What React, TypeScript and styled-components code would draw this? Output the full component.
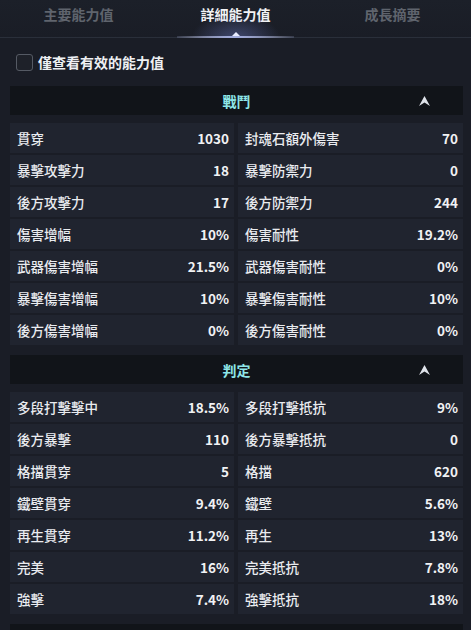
import React from 'react';
import styled, { createGlobalStyle } from 'styled-components';

const GlobalStyle = createGlobalStyle`
  html, body {
    margin: 0;
    padding: 0;
    background: #1a1d26;
  }
  body {
    font-family: "Noto Sans CJK TC", "Noto Sans", sans-serif;
    color: #e6e8ec;
  }
`;

const Page = styled.div`
  width: 471px;
  height: 630px;
  overflow: hidden;
  background: #1a1d26;
`;

const TabBar = styled.div`
  display: flex;
  height: 37px;
  border-bottom: 1px solid #2a2f3a;
  background: linear-gradient(#1c2029, #1a1d26);
`;

const Tab = styled.div<{ $active?: boolean }>`
  flex: 1;
  position: relative;
  display: flex;
  justify-content: center;
  padding-top: 4px;
  font-size: 14px;
  font-weight: 700;
  color: ${(p) => (p.$active ? '#f2f3f5' : '#5f646d')};
`;

const Indicator = styled.div`
  position: absolute;
  left: 20px;
  right: 20px;
  bottom: -1px;
  height: 2px;
  background: linear-gradient(90deg, rgba(160,170,210,0.2), #cfd6f5 50%, rgba(160,170,210,0.2));

  &::before {
    content: '';
    position: absolute;
    left: 50%;
    bottom: 0;
    width: 90px;
    height: 24px;
    transform: translateX(-50%);
    background: radial-gradient(ellipse at 50% 100%, rgba(110,125,200,0.45), rgba(110,125,200,0) 70%);
  }

  &::after {
    content: '';
    position: absolute;
    left: 50%;
    bottom: 2px;
    transform: translateX(-50%);
    border-left: 4px solid transparent;
    border-right: 4px solid transparent;
    border-bottom: 4px solid #e8ecff;
  }
`;

const Content = styled.div`
  padding: 0 8px 0 10px;
`;

const FilterRow = styled.label`
  display: flex;
  align-items: center;
  gap: 5px;
  height: 48px;
  padding-left: 6px;
  font-size: 14px;
  font-weight: 700;
  color: #eef0f3;
`;

const CheckBox = styled.span`
  width: 15px;
  height: 15px;
  border: 1px solid #555a64;
  border-radius: 3px;
  background: #1e2129;
`;

const Section = styled.section`
  margin-bottom: 10px;
`;

const SectionHeader = styled.div`
  position: relative;
  height: 29px;
  display: flex;
  align-items: center;
  justify-content: center;
  background: #111419;
  font-size: 14px;
  font-weight: 700;
  color: #8ee6e8;
  margin-bottom: 8px;
`;

const Toggle = styled.svg`
  position: absolute;
  right: 33px;
  top: 10px;
`;

const Grid = styled.div`
  display: grid;
  grid-template-columns: 224px 225px;
  column-gap: 4px;
  row-gap: 2px;
`;

const Cell = styled.div`
  height: 30px;
  display: flex;
  align-items: center;
  justify-content: space-between;
  padding: 0 5px 0 7px;
  background: #20242f;
  font-size: 13.5px;
`;

const Label = styled.span`
  font-weight: 500;
  color: #e9ebef;
`;

const Value = styled.span`
  font-weight: 700;
  color: #f1f2f4;
`;

type Stat = [string, string];

const combat: Stat[] = [
  ['貫穿', '1030'], ['封魂石額外傷害', '70'],
  ['暴擊攻擊力', '18'], ['暴擊防禦力', '0'],
  ['後方攻擊力', '17'], ['後方防禦力', '244'],
  ['傷害增幅', '10%'], ['傷害耐性', '19.2%'],
  ['武器傷害增幅', '21.5%'], ['武器傷害耐性', '0%'],
  ['暴擊傷害增幅', '10%'], ['暴擊傷害耐性', '10%'],
  ['後方傷害增幅', '0%'], ['後方傷害耐性', '0%'],
];

const judge: Stat[] = [
  ['多段打擊擊中', '18.5%'], ['多段打擊抵抗', '9%'],
  ['後方暴擊', '110'], ['後方暴擊抵抗', '0'],
  ['格擋貫穿', '5'], ['格擋', '620'],
  ['鐵壁貫穿', '9.4%'], ['鐵壁', '5.6%'],
  ['再生貫穿', '11.2%'], ['再生', '13%'],
  ['完美', '16%'], ['完美抵抗', '7.8%'],
  ['強擊', '7.4%'], ['強擊抵抗', '18%'],
];

const ArrowUp = () => (
  <Toggle width="11" height="10" viewBox="0 0 11 10">
    <path d="M5.5 0 L11 10 L5.5 6.5 L0 10 Z" fill="#dfe3ea" />
  </Toggle>
);

const StatSection = ({ title, stats }: { title: string; stats: Stat[] }) => (
  <Section>
    <SectionHeader>
      {title}
      <ArrowUp />
    </SectionHeader>
    <Grid>
      {stats.map(([label, value], i) => (
        <Cell key={i}>
          <Label>{label}</Label>
          <Value>{value}</Value>
        </Cell>
      ))}
    </Grid>
  </Section>
);

export default function App() {
  return (
    <Page>
      <GlobalStyle />
      <TabBar>
        <Tab>主要能力值</Tab>
        <Tab $active>
          詳細能力值
          <Indicator />
        </Tab>
        <Tab>成長摘要</Tab>
      </TabBar>
      <Content>
        <FilterRow>
          <CheckBox />
          僅查看有效的能力值
        </FilterRow>
        <StatSection title="戰鬥" stats={combat} />
        <StatSection title="判定" stats={judge} />
        <SectionHeader />
      </Content>
    </Page>
  );
}
